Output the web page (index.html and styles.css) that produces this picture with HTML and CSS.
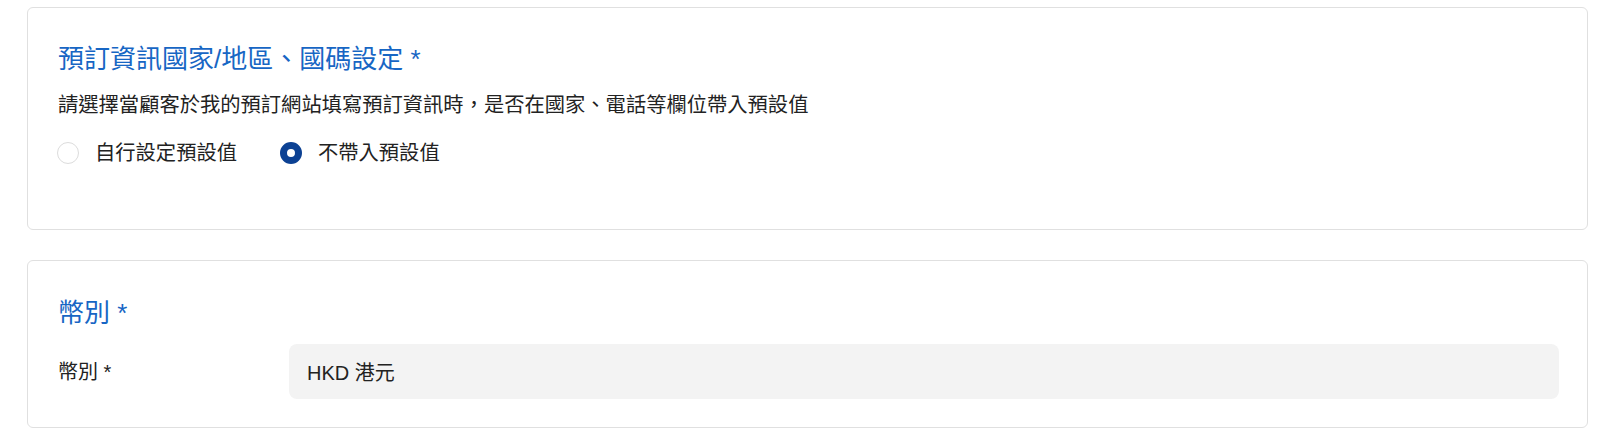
FILE: index.html
```html
<!DOCTYPE html>
<html lang="zh-Hant">
<head>
    <meta charset="UTF-8">
    <meta name="viewport" content="width=device-width, initial-scale=1.0">
    <title>預訂設定</title>
    <link rel="stylesheet" href="styles.css">
</head>
<body>
    <div class="panel">
        <h2 class="panel-title">預訂資訊國家/地區、國碼設定 *</h2>
        <p class="panel-desc">請選擇當顧客於我的預訂網站填寫預訂資訊時，是否在國家、電話等欄位帶入預設值</p>
        <div class="radio-group">
            <label class="radio">
                <span class="radio-dot"></span>
                <span>自行設定預設值</span>
            </label>
            <label class="radio checked">
                <span class="radio-dot"></span>
                <span>不帶入預設值</span>
            </label>
        </div>
    </div>

    <div class="panel panel-currency">
        <h2 class="panel-title">幣別 *</h2>
        <div class="field-row">
            <div class="field-label">幣別 *</div>
            <div class="field-value">HKD 港元</div>
        </div>
    </div>
</body>
</html>
```

FILE: styles.css
```css
body {
    margin: 0;
    padding: 7px 12px 0 27px;
    background-color: #fff;
    font-family: "Liberation Sans", "Noto Sans CJK TC", sans-serif;
    color: #222;
}

.panel {
    border: 1px solid #e0e0e0;
    border-radius: 6px;
    padding: 33px 28px 62px 30px;
    margin-bottom: 30px;
}

.panel-currency {
    padding-top: 34px;
    padding-bottom: 28px;
}

.panel-title {
    margin: 0;
    font-size: 26px;
    line-height: 36px;
    font-weight: normal;
    color: #1766c4;
}

.panel-desc {
    margin: 14px 0 0;
    font-size: 20.3px;
    line-height: 28px;
}

.radio-group {
    display: flex;
    gap: 44px;
    margin-top: 20px;
}

.radio {
    display: flex;
    align-items: center;
    gap: 16px;
    font-size: 20.3px;
    line-height: 28px;
}

.radio-dot {
    width: 22px;
    height: 22px;
    box-sizing: border-box;
    border: 1.5px solid #dcdcdc;
    border-radius: 50%;
    background-color: #fff;
    margin-left: -1px;
}

.radio.checked .radio-dot {
    border: 7px solid #0c4193;
}

.field-row {
    display: flex;
    align-items: center;
    margin-top: 13px;
}

.field-label {
    width: 231px;
    font-size: 20px;
    line-height: 28px;
}

.field-value {
    flex: 1;
    height: 55px;
    display: flex;
    align-items: center;
    padding: 0 18px;
    background-color: #f3f3f3;
    border-radius: 8px;
    font-size: 20px;
}
```
